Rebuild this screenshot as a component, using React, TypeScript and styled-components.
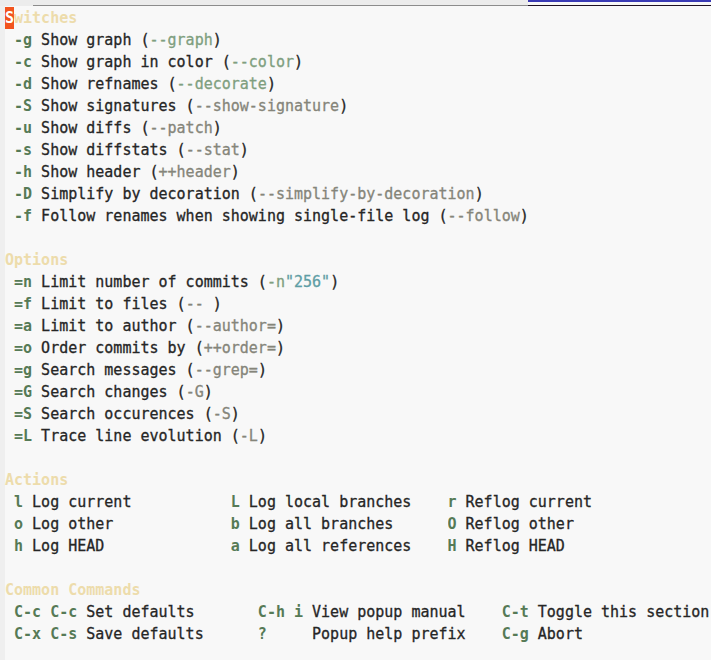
import React from "react";
import styled, { createGlobalStyle } from "styled-components";

const Global = createGlobalStyle`
  html, body { margin: 0; padding: 0; background: #f8f8f8; }
  body { font-family: "DejaVu Sans Mono", "Liberation Mono", monospace; }
`;

const Frame = styled.div`
  width: 711px;
  height: 660px;
  overflow: hidden;
  background: #f8f8f8;
  display: flex;
  flex-direction: column;
`;

const TopStrip = styled.div`
  display: flex;
  height: 6px;
  flex: none;
`;

const StripLeft = styled.div`
  width: 33px;
  background: #ececec;
`;

const StripMid = styled.div`
  flex: 1;
  background: #ececec;
  border-bottom: 1px solid #8c8c8c;
  box-sizing: border-box;
`;

const StripRight = styled.div`
  width: 183px;
  box-sizing: border-box;
  border-top: 2px solid #3a3ab4;
  border-bottom: 1px solid #1e1020;
  background: #f8f8f8;
`;

const Body = styled.div`
  flex: 1;
  display: flex;
`;

const Fringe = styled.div`
  width: 5px;
  background: #efefef;
  flex: none;
`;

const Text = styled.div`
  flex: 1;
  padding-top: 0.5px;
  font-size: 15px;
  line-height: 22px;
  color: #262626;
  white-space: pre;
  -webkit-text-stroke: 0.3px currentColor;
`;

const Line = styled.div`
  height: 22px;
`;

const Heading = styled.span`
  color: #eddcab;
  font-weight: bold;
  -webkit-text-stroke: 0;
`;

const Cursor = styled.span`
  display: inline-block;
  vertical-align: top;
  height: 22px;
  background: #f2541e;
  color: #ffffff;
  font-weight: bold;
  -webkit-text-stroke: 0;
`;

const Key = styled.span`
  color: #567a56;
  font-weight: bold;
  -webkit-text-stroke: 0;
`;

const Arg = styled.span<{ $on?: boolean }>`
  color: ${(p) => (p.$on ? "#7f9f7f" : "#85857a")};
`;

const Val = styled.span`
  color: #5f9ea5;
`;

const Cell = styled.span<{ $w: number }>`
  display: inline-block;
  vertical-align: top;
  width: ${(p) => p.$w}ch;
  overflow: hidden;
`;

const switches: [string, string, string, boolean][] = [
  ["-g", "Show graph", "--graph", true],
  ["-c", "Show graph in color", "--color", true],
  ["-d", "Show refnames", "--decorate", true],
  ["-S", "Show signatures", "--show-signature", false],
  ["-u", "Show diffs", "--patch", false],
  ["-s", "Show diffstats", "--stat", false],
  ["-h", "Show header", "++header", false],
  ["-D", "Simplify by decoration", "--simplify-by-decoration", false],
  ["-f", "Follow renames when showing single-file log", "--follow", false],
];

const options: [string, string, string][] = [
  ["=f", "Limit to files", "-- "],
  ["=a", "Limit to author", "--author="],
  ["=o", "Order commits by", "++order="],
  ["=g", "Search messages", "--grep="],
  ["=G", "Search changes", "-G"],
  ["=S", "Search occurences", "-S"],
  ["=L", "Trace line evolution", "-L"],
];

const actions: [string, string][][] = [
  [["l", "Log current"], ["L", "Log local branches"], ["r", "Reflog current"]],
  [["o", "Log other"], ["b", "Log all branches"], ["O", "Reflog other"]],
  [["h", "Log HEAD"], ["a", "Log all references"], ["H", "Reflog HEAD"]],
];

const common: [string, string][][] = [
  [["C-c C-c", "Set defaults"], ["C-h i", "View popup manual"], ["C-t", "Toggle this section"]],
  [["C-x C-s", "Save defaults"], ["?    ", "Popup help prefix"], ["C-g", "Abort"]],
];

export default function App() {
  return (
    <>
      <Global />
      <Frame>
        <TopStrip>
          <StripLeft />
          <StripMid />
          <StripRight />
        </TopStrip>
        <Body>
          <Fringe />
          <Text>
            <Line>
              <Cursor>S</Cursor>
              <Heading>witches</Heading>
            </Line>
            {switches.map(([k, d, a, on]) => (
              <Line key={k}>
                {" "}
                <Key>{k}</Key>
                {" " + d + " ("}
                <Arg $on={on}>{a}</Arg>
                {")"}
              </Line>
            ))}
            <Line />
            <Line>
              <Heading>Options</Heading>
            </Line>
            <Line>
              {" "}
              <Key>=n</Key>
              {" Limit number of commits ("}
              <Arg $on>-n</Arg>
              <Val>"256"</Val>
              {")"}
            </Line>
            {options.map(([k, d, a]) => (
              <Line key={k}>
                {" "}
                <Key>{k}</Key>
                {" " + d + " ("}
                <Arg>{a}</Arg>
                {")"}
              </Line>
            ))}
            <Line />
            <Line>
              <Heading>Actions</Heading>
            </Line>
            {actions.map((row, i) => (
              <Line key={i}>
                {" "}
                {row.map(([k, d]) => (
                  <Cell $w={24} key={k}>
                    <Key>{k}</Key>
                    {" " + d}
                  </Cell>
                ))}
              </Line>
            ))}
            <Line />
            <Line>
              <Heading>Common Commands</Heading>
            </Line>
            {common.map((row, i) => (
              <Line key={i}>
                {" "}
                {row.map(([k, d]) => (
                  <Cell $w={27} key={k}>
                    <Key>{k}</Key>
                    {" " + d}
                  </Cell>
                ))}
              </Line>
            ))}
          </Text>
        </Body>
      </Frame>
    </>
  );
}
